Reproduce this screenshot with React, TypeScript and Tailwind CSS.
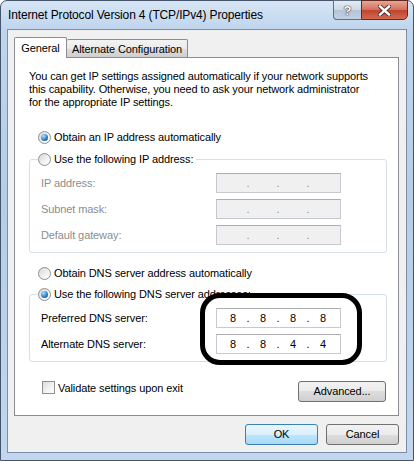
import React from 'react'

const field = 'flex h-[20px] w-[125px] items-center border border-[#c6cad0] border-t-[#abadb3] pl-[4px]'

function Radio({ checked }: { checked?: boolean }) {
  return (
    <span className="flex h-[13px] w-[13px] shrink-0 items-center justify-center rounded-full border border-[#8e8f8f] bg-[linear-gradient(135deg,#d8d8d8,#f4f4f4_65%,#ffffff)]">
      {checked && (
        <span className="h-[7px] w-[7px] rounded-full bg-[radial-gradient(circle_at_35%_30%,#b4e0fa,#2f82c6_55%,#0c3a66)]" />
      )}
    </span>
  )
}

function IpField({ parts, disabled }: { parts: string[]; disabled?: boolean }) {
  return (
    <div className={`${field} ${disabled ? 'bg-[#f0f0f0] text-[#8a8a8a]' : 'bg-white text-black'}`}>
      {parts.map((p, i) => (
        <React.Fragment key={i}>
          <span className="w-[24px] text-center">{p}</span>
          {i < 3 && <span className="w-[6px] text-center">.</span>}
        </React.Fragment>
      ))}
    </div>
  )
}

function Row({ label, parts, disabled }: { label: string; parts: string[]; disabled?: boolean }) {
  return (
    <div className="flex h-[20px] items-center">
      <span className={`w-[175px] ${disabled ? 'text-[#8d8d8d]' : 'text-black'}`}>{label}</span>
      <IpField parts={parts} disabled={disabled} />
    </div>
  )
}

function Button({ label, primary, width }: { label: string; primary?: boolean; width: string }) {
  return (
    <div
      className={`flex h-[21px] ${width} items-center justify-center rounded-[3px] border ${
        primary
          ? 'border-[#3c7fb1] bg-[linear-gradient(#eaf6fd,#d9f0fc_50%,#bee6fd_50%,#a7d9f5)]'
          : 'border-[#707070] bg-[linear-gradient(#f2f2f2,#ebebeb_50%,#dddddd_50%,#cfcfcf)]'
      }`}
    >
      {label}
    </div>
  )
}

export default function App() {
  const empty = ['', '', '', '']

  return (
    <div className="relative h-[461px] w-[414px] overflow-hidden bg-white font-['Liberation_Sans',Arial,sans-serif] text-[11px] leading-[13px] tracking-[-0.1px] text-black">
      <div className="flex h-[461px] w-[414px] flex-col rounded-t-[7px] border border-[#44546a] bg-[linear-gradient(#d7e6f6,#bfd5ed_28px,#b6cde8_200px,#c2d7ee)]">
        {/* title bar */}
        <div className="flex h-[28px] items-start">
          <span className="mt-[8px] pl-[7px] text-[12px] tracking-[-0.15px]">Internet Protocol Version 4 (TCP/IPv4) Properties</span>
          <div className="-mt-[1px] ml-auto mr-[5px] flex h-[20px]">
            <div className="flex w-[28px] items-center justify-center rounded-bl-[4px] border border-r-0 border-[#5f6f82] bg-[linear-gradient(#e4ecf5,#cdd9e6_50%,#b3c3d6_50%,#c3d2e2)]">
              <span className="text-[13px] font-bold text-white [text-shadow:0_0_1px_#333,0_0_1px_#333,0_0_1px_#333]">?</span>
            </div>
            <div className="flex w-[47px] items-center justify-center rounded-br-[5px] border border-[#5f2a22] bg-[linear-gradient(#e8a593,#d2705c_50%,#c04330_50%,#d26a4f)]">
              <svg width="13" height="11" viewBox="0 0 13 11">
                <path d="M2 1.5 L11 9.5 M11 1.5 L2 9.5" stroke="#3b2a28" strokeWidth="4.2" strokeLinecap="round" />
                <path d="M2 1.5 L11 9.5 M11 1.5 L2 9.5" stroke="#ffffff" strokeWidth="2.4" strokeLinecap="square" />
              </svg>
            </div>
          </div>
        </div>

        {/* client area */}
        <div className="mx-[6px] h-[424px] border border-[#7c8ea6] bg-[#f0f0f0]">
          <div className="mt-[7px] flex h-[20px] items-end whitespace-nowrap pl-[6px]">
            <div className="relative z-10 -mb-[1px] flex h-[21px] w-[53px] items-start justify-center rounded-t-[2px] border border-b-0 border-[#898c95] bg-white pt-[4px]">
              General
            </div>
            <div className="flex h-[18px] w-[121px] items-center justify-center rounded-t-[2px] border border-b-0 border-l-0 border-[#898c95] bg-[linear-gradient(#f3f3f3,#ebebeb_50%,#dddddd_50%,#cfcfcf)] pt-[1px]">
              Alternate Configuration
            </div>
          </div>

          <div className="ml-[6px] h-[359px] w-[385px] border border-[#898c95] bg-white">
            <p className="pl-[14px] pt-[12px]">
              You can get IP settings assigned automatically if your network supports
              <br />
              this capability. Otherwise, you need to ask your network administrator
              <br />
              for the appropriate IP settings.
            </p>

            <div className="mt-[21px] flex h-[15px] items-center gap-[3px] pl-[23px]">
              <Radio checked />
              <span>Obtain an IP address automatically</span>
            </div>

            <fieldset className="ml-[14px] mt-[7px] w-[358px] rounded-[3px] border border-[#d5dfe5] pb-[7px] pl-[11px] pt-[6px]">
              <legend className="-ml-[3px] flex h-[15px] items-center gap-[3px] pr-[3px]">
                <Radio />
                <span>Use the following IP address:</span>
              </legend>
              <div className="flex flex-col gap-[6px]">
                <Row label="IP address:" parts={empty} disabled />
                <Row label="Subnet mask:" parts={empty} disabled />
                <Row label="Default gateway:" parts={empty} disabled />
              </div>
            </fieldset>

            <div className="mt-[13px] flex h-[15px] items-center gap-[3px] pl-[23px]">
              <Radio />
              <span>Obtain DNS server address automatically</span>
            </div>

            <fieldset className="ml-[14px] mt-[6px] w-[358px] rounded-[3px] border border-[#d5dfe5] pb-[7px] pl-[11px] pt-[6px]">
              <legend className="-ml-[3px] flex h-[15px] items-center gap-[3px] pr-[3px]">
                <Radio checked />
                <span>Use the following DNS server addresses:</span>
              </legend>
              <div className="flex flex-col gap-[6px]">
                <Row label="Preferred DNS server:" parts={['8', '8', '8', '8']} />
                <Row label="Alternate DNS server:" parts={['8', '8', '4', '4']} />
              </div>
            </fieldset>

            <div className="mt-[19px] flex items-start justify-between pl-[27px] pr-[12px]">
              <div className="flex h-[13px] items-center gap-[3px]">
                <span className="h-[13px] w-[13px] border border-[#8e8f8f] bg-[linear-gradient(135deg,#dcdcdc,#f7f7f7_70%,#ffffff)]" />
                <span className="pt-[1px]">Validate settings upon exit</span>
              </div>
              <Button label="Advanced..." width="w-[88px]" />
            </div>
          </div>

          <div className="ml-[6px] mt-[8px] flex w-[385px] justify-end gap-[8px]">
            <Button label="OK" primary width="w-[73px]" />
            <Button label="Cancel" width="w-[73px]" />
          </div>
        </div>
      </div>

      {/* hand-drawn highlight around the DNS entries */}
      <div className="pointer-events-none absolute left-[200px] top-[293px] h-[72px] w-[162px] rounded-[20px] border-[5px] border-black" />
    </div>
  )
}
